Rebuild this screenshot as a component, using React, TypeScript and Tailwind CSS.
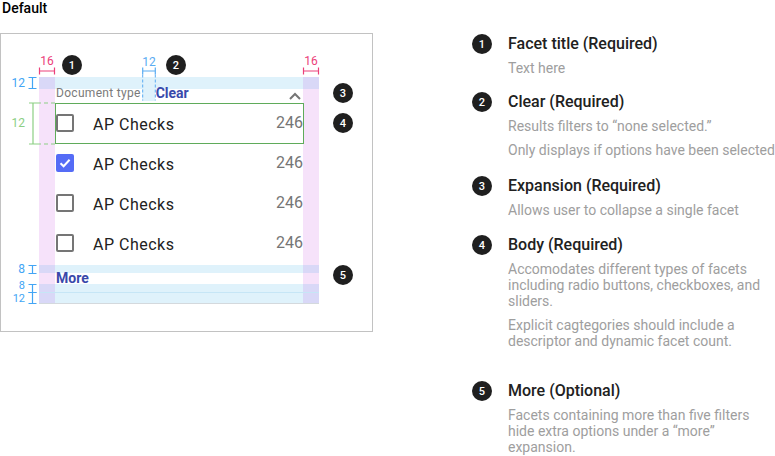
import type { ReactNode } from "react";

type Note = {
  n: number;
  title: string;
  paragraphs: string[][];
  className: string;
};

const NOTES: Note[] = [
  { n: 1, title: "Facet title (Required)", paragraphs: [["Text here"]], className: "" },
  {
    n: 2,
    title: "Clear (Required)",
    paragraphs: [["Results filters to “none selected.”"], ["Only displays if options have been selected"]],
    className: "mt-[16px]",
  },
  {
    n: 3,
    title: "Expansion (Required)",
    paragraphs: [["Allows user to collapse a single facet"]],
    className: "mt-[18px]",
  },
  {
    n: 4,
    title: "Body (Required)",
    paragraphs: [
      ["Accomodates different types of facets", "including radio buttons, checkboxes, and", "sliders."],
      ["Explicit cagtegories should include a", "descriptor and dynamic facet count."],
    ],
    className: "mt-[17px]",
  },
  {
    n: 5,
    title: "More (Optional)",
    paragraphs: [["Facets containing more than five filters", "hide extra options under a “more”", "expansion."]],
    className: "mt-[32px]",
  },
];

function Badge({ n, className = "" }: { n: number; className?: string }) {
  return (
    <div
      className={`flex h-5 w-5 shrink-0 items-center justify-center rounded-full bg-[#1f1f1f] text-[11px] leading-none font-medium text-white ${className}`}
    >
      {n}
    </div>
  );
}

function Band({ className = "" }: { className?: string }) {
  return (
    <div className={`flex ${className}`}>
      <div className="w-4 shrink-0 bg-[#d9d8f7]" />
      <div className="flex-1 bg-[#dff2fb]" />
      <div className="w-4 shrink-0 bg-[#d9d8f7]" />
    </div>
  );
}

function Row({ children, className = "" }: { children?: ReactNode; className?: string }) {
  return (
    <div className={`flex ${className}`}>
      <div className="w-4 shrink-0 bg-[#f6e2fa]" />
      <div className="flex min-w-0 flex-1">{children}</div>
      <div className="w-4 shrink-0 bg-[#f6e2fa]" />
    </div>
  );
}

function Checkbox({ checked }: { checked?: boolean }) {
  if (checked) {
    return (
      <div className="ml-[1px] flex h-[18px] w-[18px] shrink-0 items-center justify-center rounded-[2px] bg-[#556cf6]">
        <svg width="14" height="14" viewBox="0 0 14 14" fill="none">
          <path d="M2.5 7.2 L5.6 10.2 L11.6 3.8" stroke="white" strokeWidth="2" />
        </svg>
      </div>
    );
  }
  return <div className="ml-[1px] h-[18px] w-[18px] shrink-0 rounded-[2px] border-2 border-[#757575]" />;
}

function OptionRow({ checked }: { checked?: boolean }) {
  return (
    <Row className="h-10">
      <div className="flex flex-1 items-center">
        <Checkbox checked={checked} />
        <span className="mt-[3px] ml-[19px] text-[16px] tracking-[0.5px] text-[#212121]">AP Checks</span>
        <span className="mb-[1px] ml-auto text-[16px] text-[#757575]">246</span>
      </div>
    </Row>
  );
}

function Facet() {
  return (
    <div className="w-[280px]">
      <Band className="h-3" />
      <Row className="h-[14px]">
        <div className="flex flex-1 items-start">
          <span className="ml-[1px] text-[12px] leading-[8px] tracking-[0.3px] text-[#7a7a7a]">Document type</span>
          <div className="ml-[1px] h-3 w-[13px] bg-[#dff2fb]" />
          <span className="ml-[1px] text-[14px] leading-[8px] font-bold text-[#3949ab]">Clear</span>
          <svg className="mt-[3px] mr-[2px] ml-auto" width="12" height="8" viewBox="0 0 12 8" fill="none">
            <path d="M1 7 L6 2 L11 7" stroke="#757575" strokeWidth="2" />
          </svg>
        </div>
      </Row>
      <OptionRow />
      <OptionRow checked />
      <OptionRow />
      <OptionRow />
      <Row className="h-[2px]" />
      <Band className="h-2" />
      <Row className="h-[11px]">
        <span className="ml-[1px] text-[14px] leading-[11px] font-bold text-[#3949ab]">More</span>
      </Row>
      <Band className="h-2" />
      <Band className="h-3 border-t border-b border-t-[#c6e6f6] border-b-[#d4d9dd]" />
    </div>
  );
}

function WidthMark({ className, color }: { className: string; color: string }) {
  return (
    <svg className={`absolute ${className}`} width="18" height="8" viewBox="0 0 18 8" fill="none">
      <path d="M1.5 4 H16.5 M1.5 0.5 V7.5 M16.5 0.5 V7.5" stroke={color} strokeWidth="1.2" />
    </svg>
  );
}

function HeightMark({ className, h }: { className: string; h: number }) {
  return (
    <svg className={`absolute ${className}`} width="9" height={h} viewBox={`0 0 9 ${h}`} fill="none">
      <path d={`M4.5 0.5 V${h - 0.5} M0.5 0.5 H8.5 M0.5 ${h - 0.5} H8.5`} stroke="#42a5f5" strokeWidth="1.2" />
    </svg>
  );
}

function Annotations() {
  return (
    <>
      {/* margins */}
      <span className="absolute top-[55px] left-[39px] w-4 text-center text-[12px] leading-[12px] text-[#ec407a]">16</span>
      <WidthMark className="top-[67px] left-[38px]" color="#ec407a" />
      <span className="absolute top-[55px] left-[303px] w-4 text-center text-[12px] leading-[12px] text-[#ec407a]">16</span>
      <WidthMark className="top-[67px] left-[302px]" color="#ec407a" />

      {/* clear spacing */}
      <span className="absolute top-[56px] left-[142px] w-[14px] text-center text-[12px] leading-[12px] text-[#5aacf2]">12</span>
      <svg className="absolute top-[67px] left-[142px]" width="14" height="34" viewBox="0 0 14 34" fill="none">
        <path d="M0.7 4 H13.3 M0.7 0.5 V7.5 M13.3 0.5 V7.5" stroke="#5aacf2" strokeWidth="1.2" />
        <path d="M0.7 7.5 V33.5 M13.3 7.5 V33.5" stroke="#5aacf2" strokeWidth="1" strokeDasharray="3 2" />
      </svg>

      {/* left vertical marks */}
      <span className="absolute top-[77px] left-[5px] w-5 text-right text-[12px] leading-[12px] text-[#42a5f5]">12</span>
      <HeightMark className="top-[77px] left-[28px]" h={12} />

      <span className="absolute top-[117px] left-[5px] w-5 text-right text-[12px] leading-[12px] text-[#8ccf84]">12</span>
      <svg className="absolute top-[102px] left-[28px]" width="28" height="43" viewBox="0 0 28 43" fill="none">
        <path d="M5 1 V42 M1 1 H9 M1 42 H9" stroke="#8ccf84" strokeWidth="1.2" />
        <path d="M9 1 H27 M9 42 H27" stroke="#8ccf84" strokeWidth="1" strokeDasharray="4 3" />
      </svg>
      <div className="absolute top-[103px] left-[55px] h-[41px] w-[249px] border border-[#5fab5a]" />

      <span className="absolute top-[264px] left-[5px] w-5 text-right text-[12px] leading-[10px] text-[#42a5f5]">8</span>
      <HeightMark className="top-[265px] left-[28px]" h={9} />
      <span className="absolute top-[281px] left-[5px] w-5 text-right text-[11px] leading-[9px] text-[#42a5f5]">8</span>
      <HeightMark className="top-[284px] left-[28px]" h={9} />
      <span className="absolute top-[294px] left-[5px] w-5 text-right text-[11px] leading-[9px] text-[#42a5f5]">12</span>
      <HeightMark className="top-[292px] left-[28px]" h={12} />

      <Badge n={1} className="absolute top-[55px] left-[62px]" />
      <Badge n={2} className="absolute top-[55px] left-[166px]" />
      <Badge n={3} className="absolute top-[83px] left-[333px]" />
      <Badge n={4} className="absolute top-[113px] left-[333px]" />
      <Badge n={5} className="absolute top-[265px] left-[333px]" />
    </>
  );
}

export default function App() {
  return (
    <div className="relative flex h-[456px] w-[775px] overflow-hidden bg-white font-[Roboto,sans-serif]">
      <div className="w-[472px] shrink-0">
        <h2 className="pl-[2px] text-[14px] leading-4 font-medium text-black">Default</h2>
        <div className="mt-[17px] h-[299px] w-[373px] border border-[#c2c2c2] pt-[43px] pl-[38px]">
          <Facet />
        </div>
      </div>

      <div className="flex flex-col pt-[34px]">
        {NOTES.map((note) => (
          <div key={note.n} className={`flex items-start gap-4 ${note.className}`}>
            <Badge n={note.n} />
            <div>
              <p className="text-[16px] leading-5 font-medium text-[#212121]">{note.title}</p>
              <div className="mt-[6px] flex flex-col gap-2">
                {note.paragraphs.map((lines, i) => (
                  <p key={i} className="text-[14px] leading-4 whitespace-nowrap text-[#9e9e9e]">
                    {lines.map((line, j) => (
                      <span key={j} className="block">
                        {line}
                      </span>
                    ))}
                  </p>
                ))}
              </div>
            </div>
          </div>
        ))}
      </div>

      <Annotations />
    </div>
  );
}
